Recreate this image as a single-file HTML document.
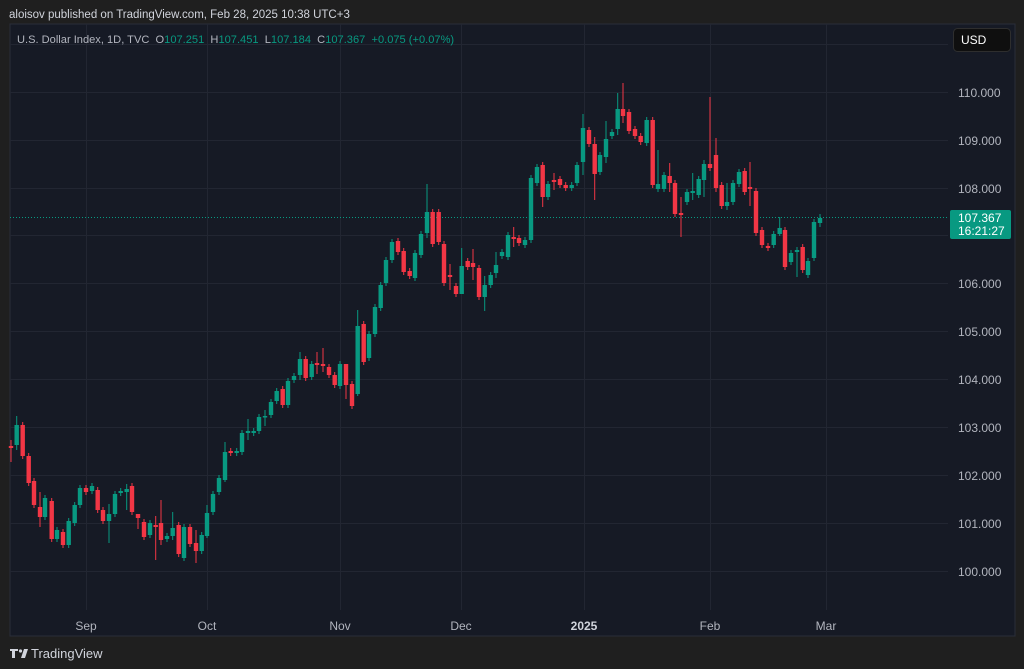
<!DOCTYPE html>
<html><head><meta charset="utf-8"><style>
html,body{margin:0;padding:0;background:#1f1f1f;width:1024px;height:669px;overflow:hidden;font-family:"Liberation Sans",sans-serif}
svg{position:absolute;left:0;top:0}
text{white-space:pre}
</style></head><body>
<svg id="c" width="1024" height="669" xmlns="http://www.w3.org/2000/svg">
<rect x="0" y="0" width="1024" height="669" fill="#1f1f1f"/>
<rect x="10" y="24" width="1005" height="612" fill="#161a25" stroke="#2a2e39" stroke-width="1"/>
<g stroke="#222632" stroke-width="1">
<line x1="86.5" y1="24" x2="86.5" y2="610"/><line x1="207.5" y1="24" x2="207.5" y2="610"/>
<line x1="340.5" y1="24" x2="340.5" y2="610"/><line x1="461.5" y1="24" x2="461.5" y2="610"/>
<line x1="584.5" y1="24" x2="584.5" y2="610"/><line x1="710.5" y1="24" x2="710.5" y2="610"/>
<line x1="826.5" y1="24" x2="826.5" y2="610"/>
<line x1="10" y1="44.5" x2="948" y2="44.5"/>
<line x1="10" y1="92.5" x2="948" y2="92.5"/><line x1="10" y1="140.5" x2="948" y2="140.5"/>
<line x1="10" y1="188.5" x2="948" y2="188.5"/><line x1="10" y1="235.5" x2="948" y2="235.5"/>
<line x1="10" y1="283.5" x2="948" y2="283.5"/><line x1="10" y1="331.5" x2="948" y2="331.5"/>
<line x1="10" y1="379.5" x2="948" y2="379.5"/><line x1="10" y1="427.5" x2="948" y2="427.5"/>
<line x1="10" y1="475.5" x2="948" y2="475.5"/><line x1="10" y1="523.5" x2="948" y2="523.5"/>
<line x1="10" y1="571.5" x2="948" y2="571.5"/>
</g>
<line x1="10" y1="217.5" x2="948" y2="217.5" stroke="#089981" stroke-width="1" stroke-dasharray="1,2"/>
<g id="cd"></g>
<g fill="#b2b5be" font-size="12" font-family="Liberation Sans,sans-serif">
<text x="958" y="97">110.000</text><text x="958" y="145">109.000</text><text x="958" y="193">108.000</text>
<text x="958" y="288">106.000</text><text x="958" y="336">105.000</text><text x="958" y="384">104.000</text>
<text x="958" y="432">103.000</text><text x="958" y="480">102.000</text><text x="958" y="528">101.000</text>
<text x="958" y="576">100.000</text>
<text x="86" y="630" text-anchor="middle">Sep</text><text x="207" y="630" text-anchor="middle">Oct</text>
<text x="340" y="630" text-anchor="middle">Nov</text><text x="461" y="630" text-anchor="middle">Dec</text>
<text x="584" y="630" text-anchor="middle" font-weight="bold" fill="#d1d4dc">2025</text>
<text x="710" y="630" text-anchor="middle">Feb</text><text x="826" y="630" text-anchor="middle">Mar</text>
</g>
<rect x="950" y="210" width="61" height="29" rx="2" fill="#089981"/>
<text x="958" y="222" fill="#fff" font-size="12">107.367</text>
<text x="958" y="235" fill="#fff" font-size="12">16:21:27</text>
<rect x="953.5" y="28.5" width="57" height="23" rx="4" fill="#0f0f0f" stroke="#2e2e2e"/>
<text x="961" y="44" fill="#fff" font-size="12">USD</text>
<text x="9" y="18" fill="#d1d4dc" font-size="11.5">aloisov published on TradingView.com, Feb 28, 2025 10:38 UTC+3</text>
<text x="17" y="43" font-size="11.1" fill="#b2b5be">U.S. Dollar Index, 1D, TVC  O<tspan fill="#089981">107.251</tspan>  H<tspan fill="#089981">107.451</tspan>  L<tspan fill="#089981">107.184</tspan>  C<tspan fill="#089981">107.367</tspan>  <tspan fill="#089981">+0.075 (+0.07%)</tspan></text>
<g fill="#d1d4dc">
<path d="M10 649 h8 v2 h-3 v7 h-3 v-7 h-2z"/><circle cx="20.5" cy="651" r="1.6"/><path d="M24 649 h4 l-3 9 h-4z"/>
</g>
<text x="31" y="658" fill="#d1d4dc" font-size="13">TradingView</text>
</svg>
<script>
var d=[
[11,446,448,'r',440,462],[16.7,425,445,'g',416,450],[22.7,425,456,'r'],[28.7,456,483,'r'],[34,481,505,'r'],[40,507,517,'r',492,527],
[45,498,517,'g'],[51.7,501,539,'r'],[57,530,539,'g'],[63,532,545,'r'],[68.7,521,545,'g'],[74.7,505,523,'g'],[80,488,505,'g'],
[86,488,492,'r'],[92,486,491,'g'],[97.7,490,510,'r'],[103,510,521,'r'],[109,514,521,'g',504,543],[115,494,514,'g'],[120.7,491,493,'g'],
[126.7,489,492,'g',484,510],[132,486,512,'r'],[138,514,518,'r',514,529],[144,522,537,'r'],[150,523,535,'g'],[155.7,525,527,'r',516,560],
[161,523,540,'r',500,545],[167,536,539,'g'],[172.7,528,536,'g',512,540],[178.7,525,554,'r'],[184,527,558,'g'],[190,527,544,'r'],
[196,543,551,'r',530,563],[201.7,535,551,'g'],[207,513,536,'g',505,538],[213,494,512,'g'],[219,478,492,'g'],[225,452,480,'g',442,482],
[230.7,451,453,'r'],[236.7,451,453,'g'],[242,433,452,'g'],[248,431,433,'g',419,440],[253.7,431,433,'g'],[259,417,431,'g'],
[265,416,417,'g',410,426],[271,402,415,'g'],[276.7,391,401,'g'],[282.7,389,405,'r'],[288,381,405,'g'],[294,376,380,'g'],
[300,359,375,'g',352,380],[305.7,359,378,'r'],[311.7,364,377,'g'],[317,363,365,'r',352,374],[323,364,366,'r',348,372],
[329,367,375,'r'],[334.7,375,385,'r'],[340,364,386,'g'],[346,364,385,'r',364,399],[352,384,406,'r'],[357.7,326,394,'g',310,396],
[363.7,324,362,'r'],[369,334,358,'g'],[375,307,334,'g'],[380.7,285,308,'g'],[386,260,283,'g'],[392,242,260,'g'],[398,241,252,'r'],
[403.7,251,272,'r'],[409.7,271,276,'r'],[415,253,278,'g'],[421,234,255,'g'],[427,212,233,'g',184,238],[432.7,212,244,'r'],
[438.7,212,242,'r'],[444,244,283,'r'],[450,275,277,'r',264,290],[456,286,294,'r'],[461.7,266,294,'g',248,294],[467.7,261,267,'r'],
[473,263,267,'r',249,280],[479,268,297,'r'],[484.7,285,297,'g',276,311],[490.7,275,285,'g'],[496,265,273,'g',252,278],
[502,252,256,'g'],[508,235,257,'g'],[513.7,237,239,'r',227,247],[519,238,243,'r'],[525,240,245,'g'],[531,178,240,'g'],
[537,167,183,'g'],[542.7,165,197,'r',162,207],[548,184,197,'g'],[554,180,182,'r',173,190],[560,179,185,'r'],[565.7,185,188,'r'],
[571.7,185,188,'g'],[577,165,183,'g'],[583,128,162,'g',114,175],[589,130,144,'r'],[594.7,144,174,'r',137,200],[600,155,172,'g'],
[606,139,157,'g',121,163],[612,132,136,'g'],[617.7,109,129,'g',93,135],[623,109,116,'r',83,123],[629,112,131,'r'],[635,129,136,'r'],
[640.7,136,142,'r'],[646.7,120,143,'g'],[652.7,120,185,'r'],[658,184,189,'g',150,192],[664,175,189,'g'],[669.7,176,183,'r',163,192],
[675,183,214,'r'],[681,213,215,'r',197,237],[687,192,202,'g'],[692.7,191,193,'g',173,200],[698.7,179,195,'g'],[704,164,180,'g',160,197],
[710,164,168,'r',97,171],[716,155,188,'r',138,192],[721.7,185,206,'r'],[727,202,206,'g',183,210],[733,183,202,'g'],[739,172,184,'g'],
[744.7,171,192,'r'],[750,187,189,'r',162,206],[756,191,233,'r'],[762,230,245,'r'],[768,246,248,'r'],[773.7,234,245,'g'],
[779.7,228,234,'g',217,236],[785,230,267,'r'],[791,253,262,'g'],[797,250,252,'g',247,277],[802.7,247,270,'r'],[808,261,275,'g'],
[814,222,258,'g'],[820,218,223,'g',214,227]];
var s='';
d.forEach(function(b){var c=b[3]=='g'?'#089981':'#f23645';var hi=b[4]||b[1]-3,lo=b[5]||b[2]+3;
s+='<line x1="'+b[0]+'" y1="'+hi+'" x2="'+b[0]+'" y2="'+lo+'" stroke="'+c+'" stroke-width="1"/>';
s+='<rect x="'+(b[0]-2.2)+'" y="'+b[1]+'" width="4.4" height="'+Math.max(1.5,b[2]-b[1])+'" fill="'+c+'"/>';});
document.getElementById('cd').innerHTML=s;
</script>
</body></html>
